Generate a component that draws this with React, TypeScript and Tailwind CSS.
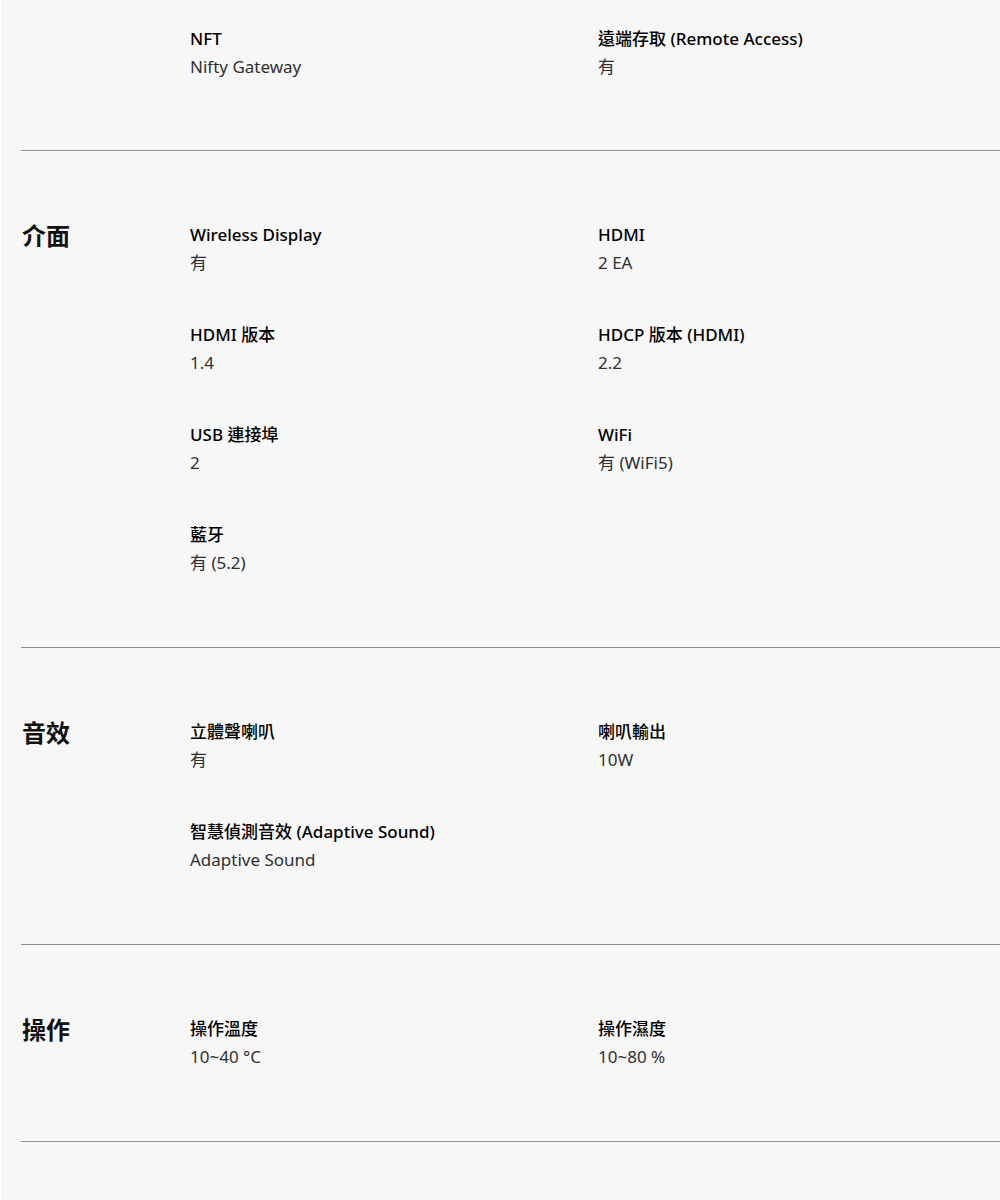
type Spec = { label: string; value: string };

type Section = { title?: string; items: Spec[] };

const sections: Section[] = [
  {
    items: [
      { label: "NFT", value: "Nifty Gateway" },
      { label: "遠端存取 (Remote Access)", value: "有" },
    ],
  },
  {
    title: "介面",
    items: [
      { label: "Wireless Display", value: "有" },
      { label: "HDMI", value: "2 EA" },
      { label: "HDMI 版本", value: "1.4" },
      { label: "HDCP 版本 (HDMI)", value: "2.2" },
      { label: "USB 連接埠", value: "2" },
      { label: "WiFi", value: "有 (WiFi5)" },
      { label: "藍牙", value: "有 (5.2)" },
    ],
  },
  {
    title: "音效",
    items: [
      { label: "立體聲喇叭", value: "有" },
      { label: "喇叭輸出", value: "10W" },
      { label: "智慧偵測音效 (Adaptive Sound)", value: "Adaptive Sound" },
    ],
  },
  {
    title: "操作",
    items: [
      { label: "操作溫度", value: "10~40 °C" },
      { label: "操作濕度", value: "10~80 %" },
    ],
  },
];

function SpecSection({ section, first }: { section: Section; first: boolean }) {
  return (
    <div className={`ml-[20px] flex border-b border-[#8f8f8f] ${first ? "pt-[25px] pb-[69px]" : "pt-[70px] pb-[70px]"}`}>
      <div className="w-[169px] shrink-0">
        {section.title && (
          <h3 className="text-[24px] leading-[34px] -mt-[2px] pl-px font-semibold text-[#111]">{section.title}</h3>
        )}
      </div>
      <div className="grid grid-cols-[408px_1fr] gap-y-[44px]">
        {section.items.map((item) => (
          <div key={item.label}>
            <div className="text-[17px] leading-[28px] font-medium text-black">{item.label}</div>
            <div className="text-[17px] leading-[28px] text-[#2f2f2f]">{item.value}</div>
          </div>
        ))}
      </div>
    </div>
  );
}

export default function App() {
  return (
    <div
      className="min-h-[1200px] bg-[#f7f7f7] border-l border-white"
      style={{ fontFamily: '"Noto Sans", "Noto Sans CJK TC", sans-serif' }}
    >
      {sections.map((s, i) => (
        <SpecSection key={i} section={s} first={i === 0} />
      ))}
    </div>
  );
}
